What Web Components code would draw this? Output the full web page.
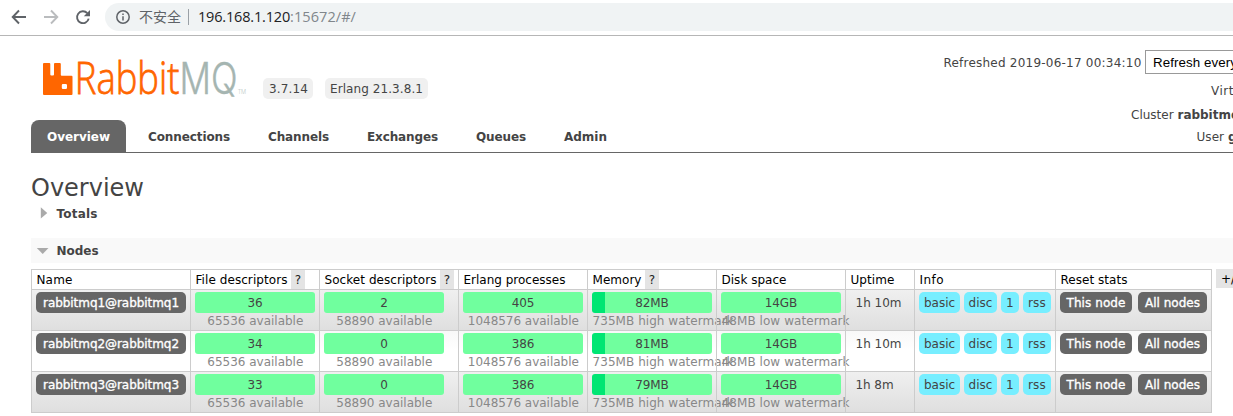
<!DOCTYPE html>
<html lang="zh">
<head>
<meta charset="utf-8">
<title>RabbitMQ Management</title>
<style>
html, body { margin: 0; height: 416px; overflow: hidden; background: #fff; }
body { font: 12px "DejaVu Sans", sans-serif; color: #444; }
</style>
</head>
<body>
<rmq-app></rmq-app>
<script>
const define = (name, html, setup) => {
  const tpl = document.createElement('template');
  tpl.innerHTML = html.trim();
  customElements.define(name, class extends HTMLElement {
    connectedCallback() {
      if (this.shadowRoot) return;
      this.attachShadow({ mode: 'open' }).append(tpl.content.cloneNode(true));
      if (setup) setup(this, this.shadowRoot);
    }
  });
};

// Text run tracked so that it fills the width given in "w".
define('fit-text', `<style>:host{display:inline-block;white-space:pre;flex:none}</style><span><slot></slot></span>`,
(el, root) => {
  const w = +el.getAttribute('w');
  if (!w) return;
  const natural = root.querySelector('span').getBoundingClientRect().width;
  el.style.letterSpacing = ((w - natural) / el.textContent.length).toFixed(3) + 'px';
  el.style.width = w + 'px';
});

define('browser-bar', `
<style>
:host{display:flex;align-items:flex-start;height:35px;border-bottom:1px solid #b6b6b6;background:#fff}
.nav{width:105px;height:35px;flex:none;display:block}
.omni{display:flex;align-items:center;height:28px;margin-top:3px;flex:1;background:#f0f3f4;border-radius:14px 0 0 14px;padding-left:10px;box-sizing:border-box}
.cn{font:14px/28px "Noto Sans CJK SC",sans-serif;color:#5f6368;margin:-2px 0 0 8px}
.sep{width:1px;height:16px;background:#9aa0a6;margin:0 9px 0 7px}
.url{font:14.5px/28px "Open Sans",sans-serif;color:#202124}
.rest{color:#80868b}
</style>
<svg class="nav" viewBox="0 0 105 35" fill="none" stroke-width="1.9">
<path d="M26 17H13.5M19 10.5L12.7 17L19 23.500" stroke="#5f6368"/>
<path d="M44 17H56.500M51 10.500L57.300 17L51 23.500" stroke="#babcbe"/>
<path d="M87.300 13.200A5.900 5.900 0 1 0 88.700 18.600" stroke="#5f6368"/>
<path d="M90 10v6.200h-6.200z" fill="#5f6368"/>
</svg>
<div class="omni">
<svg width="16" height="16" viewBox="0 0 16 16" fill="none" stroke="#5f6368" stroke-width="1.500"><circle cx="8" cy="8" r="6.200"/><path d="M8 7.200v4.200M8 4.500v1.500"/></svg>
<fit-text class="cn" w="42">不安全</fit-text><span class="sep"></span>
<fit-text class="url" w="92">196.168.1.120</fit-text><fit-text class="url rest" w="66">:15672/#/</fit-text>
</div>`);

define('rmq-badge', `
<style>:host{display:block;height:21px;line-height:23px;border-radius:5px;background:#f0f0f0;padding:0 5px 0 6px}</style><slot></slot>`);

define('rmq-logo', `
<style>:host{display:block;width:210px;height:45px} svg{display:block}</style>
<svg width="210" height="45" viewBox="0 0 210 45" font-family="Open Sans, sans-serif" font-weight="300">
<path fill="#ff6600" fill-rule="evenodd" d="M1 7H6.300Q7.300 7 7.300 8V18.500Q7.300 19.500 8.300 19.500H10Q11 19.500 11 18.500V8Q11 7 12 7H16.800Q17.800 7 17.800 8V18.700Q17.800 19.700 18.800 19.700H28.500Q29.500 19.700 29.500 20.700V38Q29.500 39 28.500 39H1Q0 39 0 38V8Q0 7 1 7ZM20 28Q18.800 28 18.800 29.200V31.800Q18.800 33 20 33H22.800Q24 33 24 31.800V29.200Q24 28 22.800 28Z"/>
<text x="31.800" y="38.300" font-size="44" fill="#ff6600" stroke="#ff6600" stroke-width=".8" textLength="104.500" lengthAdjust="spacingAndGlyphs">Rabbit</text>
<text x="136.500" y="38.300" font-family="Inter, sans-serif" font-size="43" fill="#a5b5b1" stroke="#a5b5b1" stroke-width=".4" textLength="58" lengthAdjust="spacingAndGlyphs">MQ</text>
<text x="195" y="38" font-size="6.500" fill="#a5b5b1" textLength="8" lengthAdjust="spacingAndGlyphs">TM</text>
</svg>`);

define('rmq-status', `
<style>
:host{display:block;width:290px;height:100px;overflow:hidden}
.row{display:flex;height:24px;line-height:26px;white-space:pre}
.sel{font:13.333px/24px "Liberation Sans",sans-serif;color:#000;border:1px solid #999;border-right:0;height:22px;padding-left:7px;flex:1;margin-left:3.500px;white-space:pre;overflow:hidden}
b{font-weight:bold}
</style>
<div class="row" style="padding-left:.5px"><fit-text w="198">Refreshed 2019-06-17 00:34:10</fit-text><div class="sel"><fit-text w="84">Refresh every</fit-text></div></div>
<div class="row" style="padding:5px 0 0 268px;height:23px;line-height:24px"><fit-text w="23">Virt</fit-text></div>
<div class="row" style="padding-left:188px;height:23px"><fit-text w="46.500">Cluster </fit-text><b><fit-text w="62">rabbitmq</fit-text></b></div>
<div class="row" style="padding-left:253.500px;height:22px;line-height:24px"><fit-text w="31.500">User </fit-text><b>g</b></div>`);

define('rmq-tab', `
<style>
:host{display:block;height:32px;line-height:34px;font-weight:bold;color:#444;padding:0 16px;margin-right:6px;border-radius:8px 8px 0 0}
:host([active]){background:#666;color:#fff}
</style><slot></slot>`);

define('rmq-section', `
<style>
:host{display:flex;align-items:flex-start;height:25px;line-height:27px;font-weight:bold}
:host([open]){background:#f9f9f9}
svg{width:25.600px;height:25px;display:block;flex:none}
.down,:host([open]) .right{display:none}
:host([open]) .down{display:block}
</style>
<svg viewBox="0 0 25.600 25" fill="#aaa"><path class="right" d="M9.800 6.200V17.500L16.300 11.900z"/><path class="down" d="M5.800 10H17.500L11.700 16z"/></svg><slot></slot>`);

define('rmq-help', `
<style>:host{display:block;width:14px;height:19px;background:#e4e4e4;text-align:center;line-height:20px;color:#222}</style><slot></slot>`);

define('rmq-pill', `
<style>
:host{display:flex;justify-content:center;height:21px;line-height:22px;border-radius:5px;background:#77eeff;color:#444;flex:none}
:host([dark]){background:#666;color:#fff;-webkit-text-stroke:.35px #fff}
</style><slot></slot>`);

define('rmq-meter', `
<style>
:host{display:block;width:120px}
.bar{height:21px;line-height:22px;border-radius:3px;text-align:center;letter-spacing:-.1px;background:linear-gradient(90deg,#00e673 var(--used,0px),#70ff9e var(--used,0px))}
.sub{height:16px;line-height:15px;color:#888;display:flex;justify-content:center;padding-left:.6px;margin-top:1px}
.sub.over{justify-content:flex-start}
</style><div class="bar"></div><div class="sub"></div>`,
(el, root) => {
  root.querySelector('.bar').textContent = el.getAttribute('value');
  const sub = document.createElement('fit-text');
  const w = +el.getAttribute('w');
  sub.setAttribute('w', w);
  sub.textContent = el.getAttribute('note');
  root.querySelector('.sub').append(sub);
  if (w > 120) root.querySelector('.sub').classList.add('over');
});

define('rmq-nodes', `
<style>
:host{display:flex;align-items:flex-start}
.table{flex:none;width:1181px;border-bottom:1px solid #ccc}
.r{display:grid;grid-template-columns:159px 129px 139px 129px 129px 129px 69px 141px 157px}
.c{display:flex;align-items:flex-start;border-left:1px solid #ccc;border-top:1px solid #ccc;padding:2px 0 0 4px;box-sizing:border-box;height:41px}
.c:last-child{border-right:1px solid #ccc}
.odd{background:linear-gradient(#f0f0f0,#dfdfdf)}
.even{background:linear-gradient(#f8f8f8,#fff 50%)}
.h .c{height:20px;line-height:20px;padding:0 0 0 4.500px;color:#000}
.r .up{padding-left:9.500px;line-height:22px}
.i{gap:4px}.s{gap:6px}
rmq-help{margin-left:3.500px}
.more{margin-left:4px;width:30px;height:19px;line-height:20px;background:#e4e4e4;padding-left:5px;color:#000;overflow:hidden}
</style>
<div class="table">
<div class="r h">
<div class="c"><fit-text w="36">Name</fit-text></div>
<div class="c"><fit-text w="92">File descriptors</fit-text><rmq-help>?</rmq-help></div>
<div class="c"><fit-text w="112">Socket descriptors</fit-text><rmq-help>?</rmq-help></div>
<div class="c"><fit-text w="102">Erlang processes</fit-text></div>
<div class="c"><fit-text w="49">Memory</fit-text><rmq-help>?</rmq-help></div>
<div class="c"><fit-text w="65">Disk space</fit-text></div>
<div class="c"><fit-text w="44">Uptime</fit-text></div>
<div class="c"><fit-text w="24.500">Info</fit-text></div>
<div class="c"><fit-text w="67">Reset stats</fit-text></div>
</div></div><div class="more">+/-</div>`,
(el, root) => {
  const rows = [
    ['rabbitmq1@rabbitmq1', 36, 2, 405, '82MB', '1h 10m', 46],
    ['rabbitmq2@rabbitmq2', 34, 0, 386, '81MB', '1h 10m', 46],
    ['rabbitmq3@rabbitmq3', 33, 0, 386, '79MB', '1h 8m', 38]
  ];
  const table = root.querySelector('.table');
  rows.forEach(([name, fd, sock, proc, mem, up, upW], i) => {
    const r = document.createElement('div');
    r.className = 'r ' + (i % 2 ? 'even' : 'odd');
    const pill = (box, w, text, dark = '') => `<rmq-pill ${dark} style="width:${box}px"><fit-text w="${w}">${text}</fit-text></rmq-pill>`;
    const meter = (v, note, w, style = '') => `<div class="c"><rmq-meter value="${v}" note="${note}" w="${w}" style="${style}"></rmq-meter></div>`;
    r.innerHTML = `<div class="c">${pill(150, 136, name, 'dark')}</div>`
      + meter(fd, '65536 available', 96)
      + meter(sock, '58890 available', 96)
      + meter(proc, '1048576 available', 111)
      + meter(mem, '735MB high watermark', 141, '--used:13px')
      + meter('14GB', '48MB low watermark', 128)
      + `<div class="c up"><fit-text w="${upW}">${up}</fit-text></div>`
      + `<div class="c i">${pill(41, 31, 'basic')}${pill(33, 24, 'disc')}${pill(18, 8, '1')}${pill(28, 18, 'rss')}</div>`
      + `<div class="c s">${pill(72, 59, 'This node', 'dark')}${pill(69, 55, 'All nodes', 'dark')}</div>`;
    table.append(r);
  });
});

define('rmq-app', `
<style>
:host{display:block;width:1233px;height:416px;overflow:hidden}
header{display:flex;height:84px;padding-left:43px}
rmq-logo{margin-top:20px}
.badges{display:flex;gap:12px;margin:42px 0 0 10px}
.top{display:grid;grid-template-columns:943px 290px;height:116px;margin-bottom:0}
nav{display:flex;height:32px;margin-left:31px}
.rule{height:1px;background:#666;margin-left:31px}
main{padding:20px 0 0 31px}
h1{font-size:24px;font-weight:normal;line-height:30px;height:28px;margin:0}
rmq-status{margin-top:14px}
rmq-section[open]{margin-top:12px}
rmq-nodes{margin-top:6px}
</style>
<browser-bar></browser-bar>
<div class="top">
<div>
<header><rmq-logo></rmq-logo><div class="badges"><rmq-badge><fit-text w="39">3.7.14</fit-text></rmq-badge><rmq-badge style="padding-left:5px"><fit-text w="93">Erlang 21.3.8.1</fit-text></rmq-badge></div></header>
<nav>
<rmq-tab active><fit-text w="63">Overview</fit-text></rmq-tab>
<rmq-tab><fit-text w="82">Connections</fit-text></rmq-tab>
<rmq-tab><fit-text w="61">Channels</fit-text></rmq-tab>
<rmq-tab><fit-text w="71">Exchanges</fit-text></rmq-tab>
<rmq-tab><fit-text w="50">Queues</fit-text></rmq-tab>
<rmq-tab><fit-text w="43">Admin</fit-text></rmq-tab>
</nav>
</div>
<rmq-status></rmq-status>
</div>
<div class="rule"></div>
<main>
<h1><fit-text w="113">Overview</fit-text></h1>
<rmq-section><fit-text w="41">Totals</fit-text></rmq-section>
<rmq-section open><fit-text w="42">Nodes</fit-text></rmq-section>
<rmq-nodes></rmq-nodes>
</main>`);
</script>
</body>
</html>
